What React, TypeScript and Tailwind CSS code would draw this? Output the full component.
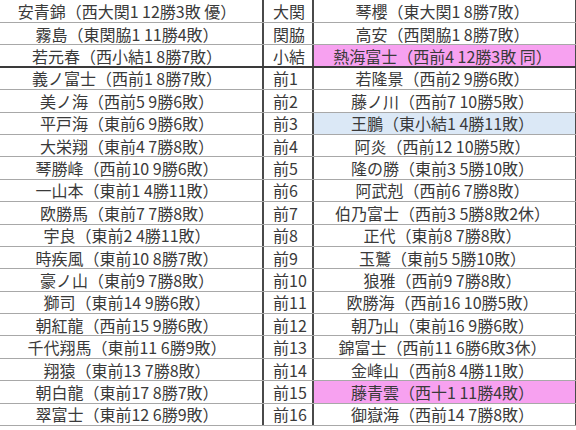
type Row = {
  left: string;
  rank: string;
  right: string;
  hl?: 'pink' | 'blue';
  thick?: boolean;
};

const rows: Row[] = [
  { left: '安青錦（西大関1 12勝3敗 優）', rank: '大関', right: '琴櫻（東大関1 8勝7敗）' },
  { left: '霧島（東関脇1 11勝4敗）', rank: '関脇', right: '高安（西関脇1 8勝7敗）' },
  { left: '若元春（西小結1 8勝7敗）', rank: '小結', right: '熱海富士（西前4 12勝3敗 同）', hl: 'pink', thick: true },
  { left: '義ノ富士（西前1 8勝7敗）', rank: '前1', right: '若隆景（西前2 9勝6敗）' },
  { left: '美ノ海（西前5 9勝6敗）', rank: '前2', right: '藤ノ川（西前7 10勝5敗）' },
  { left: '平戸海（東前6 9勝6敗）', rank: '前3', right: '王鵬（東小結1 4勝11敗）', hl: 'blue' },
  { left: '大栄翔（東前4 7勝8敗）', rank: '前4', right: '阿炎（西前12 10勝5敗）' },
  { left: '琴勝峰（西前10 9勝6敗）', rank: '前5', right: '隆の勝（東前3 5勝10敗）' },
  { left: '一山本（東前1 4勝11敗）', rank: '前6', right: '阿武剋（西前6 7勝8敗）' },
  { left: '欧勝馬（東前7 7勝8敗）', rank: '前7', right: '伯乃富士（西前3 5勝8敗2休）' },
  { left: '宇良（東前2 4勝11敗）', rank: '前8', right: '正代（東前8 7勝8敗）' },
  { left: '時疾風（東前10 8勝7敗）', rank: '前9', right: '玉鷲（東前5 5勝10敗）' },
  { left: '豪ノ山（東前9 7勝8敗）', rank: '前10', right: '狼雅（西前9 7勝8敗）' },
  { left: '獅司（東前14 9勝6敗）', rank: '前11', right: '欧勝海（西前16 10勝5敗）' },
  { left: '朝紅龍（西前15 9勝6敗）', rank: '前12', right: '朝乃山（東前16 9勝6敗）' },
  { left: '千代翔馬（東前11 6勝9敗）', rank: '前13', right: '錦富士（西前11 6勝6敗3休）' },
  { left: '翔猿（東前13 7勝8敗）', rank: '前14', right: '金峰山（西前8 4勝11敗）' },
  { left: '朝白龍（東前17 8勝7敗）', rank: '前15', right: '藤青雲（西十1 11勝4敗）', hl: 'pink' },
  { left: '翠富士（東前12 6勝9敗）', rank: '前16', right: '御嶽海（西前14 7勝8敗）' },
];

export default function App() {
  return (
    <div className="h-[430px] w-[576px] overflow-hidden bg-white font-['Noto_Sans_CJK_JP',sans-serif] text-[16px] leading-[16px] text-[#3a3a3a]">
      <div className="-ml-2 w-[585px]">
        {rows.map((r, i) => (
          <div
            key={r.rank}
            className={
              (i === 0 ? 'flex h-[23px] ' : 'flex h-[22.4px] ') +
              (r.thick ? 'border-b-2 border-[#3a3a3a]' : 'border-b border-[#a8a8a8]')
            }
          >
            <div className="flex w-[270px] items-center justify-center whitespace-nowrap">{r.left}</div>
            <div className="flex w-[50px] items-center whitespace-nowrap border-l-2 border-[#4a4a4a] pl-[9px]">
              {r.rank}
            </div>
            <div
              className={
                'flex w-[265px] items-center justify-center whitespace-nowrap border-x-2 border-[#4a4a4a] pr-1 ' +
                (r.hl === 'pink' ? 'bg-[#f7a1f0]' : r.hl === 'blue' ? 'bg-[#dbe8f6]' : '')
              }
            >
              {r.right}
            </div>
          </div>
        ))}
      </div>
    </div>
  );
}
